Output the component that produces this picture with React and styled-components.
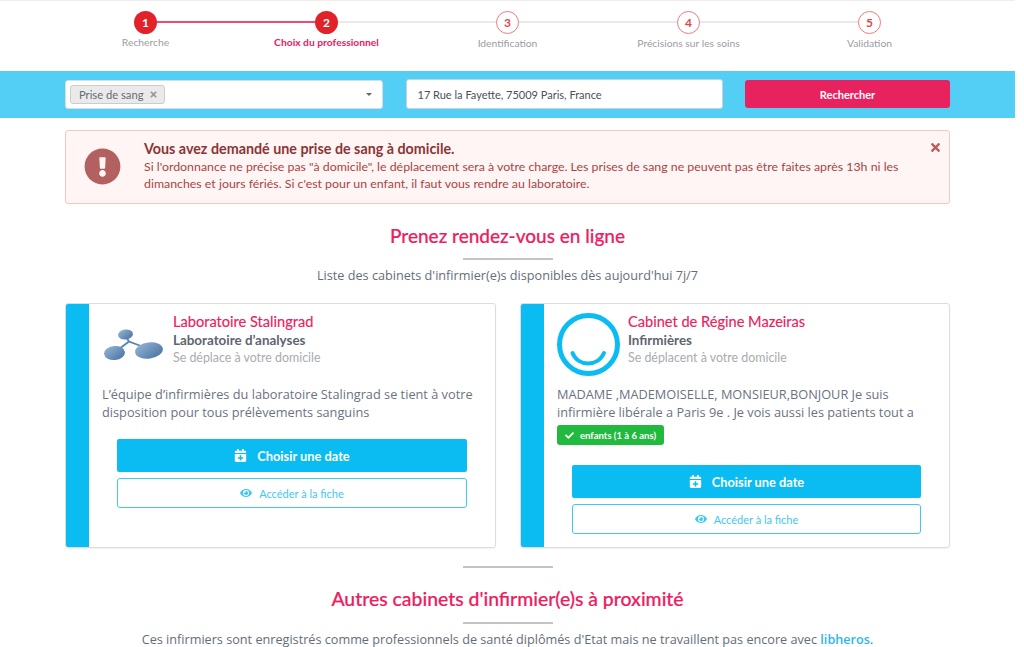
import React from 'react';
import styled, { createGlobalStyle } from 'styled-components';
import { FaCalendarPlus, FaEye, FaCheck, FaTimes, FaExclamationCircle } from 'react-icons/fa';

const GlobalStyle = createGlobalStyle`
  html, body {
    margin: 0;
    padding: 0;
    height: 647px;
    overflow: hidden;
    background: #fff;
    font-family: "Lato", "Liberation Sans", sans-serif;
  }
  #root {
    width: 1015px;
  }
  * {
    box-sizing: border-box;
  }
`;

const steps = [
  { label: 'Recherche', state: 'done' },
  { label: 'Choix du professionnel', state: 'current' },
  { label: 'Identification' },
  { label: 'Précisions sur les soins' },
  { label: 'Validation' },
];

const cards = [
  {
    name: 'Laboratoire Stalingrad',
    type: 'Laboratoire d’analyses',
    note: 'Se déplace à votre domicile',
    text: 'L’équipe d’infirmières du laboratoire Stalingrad se tient à votre disposition pour tous prélèvements sanguins',
    logo: 'lab',
  },
  {
    name: 'Cabinet de Régine Mazeiras',
    type: 'Infirmières',
    note: 'Se déplacent à votre domicile',
    text: 'MADAME ,MADEMOISELLE, MONSIEUR,BONJOUR Je suis infirmière libérale a Paris 9e . Je vois aussi les patients tout a',
    logo: 'smile',
    tag: 'enfants (1 à 6 ans)',
  },
];

const LabLogo = () => (
  <svg width="60" height="32" viewBox="0 0 60 32">
    <defs>
      <linearGradient id="blob" x1="0" y1="0" x2="1" y2="1">
        <stop offset="0" stopColor="#9ab8d8" />
        <stop offset="1" stopColor="#44709f" />
      </linearGradient>
    </defs>
    <path d="M22 8 L25 12.5 L37 17 M25 12.5 L15 20" stroke="#4f86b8" strokeWidth="1.8" fill="none" />
    <ellipse cx="21.5" cy="5.5" rx="7.5" ry="5" fill="url(#blob)" transform="rotate(-8 21.5 5.5)" />
    <ellipse cx="10.5" cy="24" rx="10.5" ry="7" fill="url(#blob)" transform="rotate(-6 10.5 24)" />
    <ellipse cx="45" cy="21.5" rx="14" ry="8" fill="url(#blob)" transform="rotate(-8 45 21.5)" />
  </svg>
);

const SmileLogo = () => (
  <svg width="63" height="63" viewBox="0 0 63 63">
    <circle cx="31.5" cy="31.5" r="29" fill="none" stroke="#0bbcf3" strokeWidth="5" />
    <path d="M15.5 40 C21 54 41 54 47 40" fill="none" stroke="#0bbcf3" strokeWidth="4" strokeLinecap="round" />
  </svg>
);

const Stepper = styled.div`
  height: 71px;
  border-top: 1px solid #eee;
  display: grid;
  grid-template-columns: repeat(5, 181px);
  justify-content: center;
  padding-top: 10px;
`;

const Step = styled.div`
  position: relative;
  display: flex;
  flex-direction: column;
  align-items: center;

  &:not(:last-child)::after {
    content: '';
    position: absolute;
    top: 10px;
    left: 50%;
    width: 100%;
    height: 2px;
    background: ${(p) => (p.$state === 'done' ? '#ec4a78' : '#eaeaea')};
  }
`;

const StepDot = styled.span`
  position: relative;
  z-index: 1;
  width: 23px;
  height: 23px;
  border-radius: 50%;
  display: flex;
  align-items: center;
  justify-content: center;
  font-size: 12px;
  font-weight: 700;
  color: ${(p) => (p.$filled ? '#fff' : '#e0474c')};
  background: ${(p) => (p.$filled ? '#e12329' : '#fff')};
  border: ${(p) => (p.$filled ? 'none' : '1px solid #ec7b7f')};
`;

const StepLabel = styled.span`
  margin-top: ${(p) => (p.$filled ? '1px' : '2px')};
  font-size: 10.3px;
  line-height: 14px;
  white-space: nowrap;
  color: ${(p) => (p.$current ? '#e8215f' : '#9a9da3')};
  font-weight: ${(p) => (p.$current ? 700 : 400)};
`;

const SearchBand = styled.div`
  height: 47px;
  padding-bottom: 1px;
  background: #53cff5;
  display: flex;
  justify-content: center;
  align-items: center;
`;

const SearchInner = styled.div`
  width: 885px;
  display: grid;
  grid-template-columns: 318px 317px 205px;
  justify-content: space-between;
  align-items: center;
`;

const SelectBox = styled.div`
  height: 29px;
  background: #fff;
  border: 1px solid #d5dce2;
  border-radius: 3px;
  padding: 0 10px 0 4px;
  display: flex;
  align-items: center;
  justify-content: space-between;
`;

const Chip = styled.span`
  height: 19px;
  padding: 0 6px 0 8px;
  display: inline-flex;
  align-items: center;
  gap: 5px;
  background: #eaeaea;
  border: 1px solid #ccc;
  border-radius: 3px;
  font-size: 11.2px;
  color: #666b73;
`;

const Caret = styled.span`
  width: 0;
  height: 0;
  border-left: 3px solid transparent;
  border-right: 3px solid transparent;
  border-top: 3px solid #666;
`;

const AddressInput = styled.div`
  height: 30px;
  background: #fff;
  border: 1px solid #c8d2da;
  border-radius: 3px;
  padding: 0 11px;
  display: flex;
  align-items: center;
  font-size: 11px;
  color: #4a4f5c;
`;

const SearchButton = styled.div`
  height: 28px;
  background: #e8215f;
  border-radius: 3px;
  color: #fff;
  font-size: 11px;
  font-weight: 700;
  display: flex;
  align-items: center;
  justify-content: center;
`;

const Main = styled.main`
  width: 885px;
  margin: 12px auto 0;
`;

const Alert = styled.div`
  position: relative;
  height: 74px;
  background: #fff5f4;
  border: 1px solid #eec9c5;
  border-radius: 3px;
  padding: 8px 40px 0 18px;
  display: flex;
  gap: 23px;
`;

const AlertIcon = styled.div`
  flex: none;
  width: 37px;
  height: 37px;
  margin-top: 9px;
  color: #b36060;
  display: flex;
`;

const AlertTitle = styled.div`
  font-size: 14.3px;
  line-height: 19px;
  font-weight: 700;
  color: #8c3434;
`;

const AlertText = styled.div`
  font-size: 12.35px;
  line-height: 17px;
  color: #a94442;
`;

const AlertClose = styled.span`
  position: absolute;
  top: 10px;
  right: 7px;
  color: #b36060;
  font-size: 13px;
  display: flex;
`;

const Section = styled.section`
  text-align: center;
`;

const Heading = styled.h2`
  margin: ${(p) => p.$top}px 0 0;
  font-size: ${(p) => p.$size}px;
  line-height: 24px;
  font-weight: 500;
  color: #ec2060;
  -webkit-text-stroke: 0.2px #ec2060;
`;

const Rule = styled.div`
  width: 90px;
  height: 2px;
  background: #c4c4c4;
  margin: ${(p) => p.$margin};
`;

const SubText = styled.p`
  margin: 0;
  font-size: 12.67px;
  line-height: 16px;
  color: #666d7a;
  font-family: "Open Sans", "Noto Sans", sans-serif;

  b {
    color: #2fb8e6;
    font-weight: 600;
  }
`;

const CardGrid = styled.div`
  display: grid;
  grid-template-columns: 431px 430px;
  justify-content: space-between;
  margin-top: 20px;
`;

const Card = styled.article`
  height: 245px;
  display: flex;
  border: 1px solid #dcdcdc;
  border-radius: 3px;
  overflow: hidden;
  box-shadow: 0 1px 2px rgba(0, 0, 0, 0.06);
`;

const CardBar = styled.div`
  flex: none;
  width: 23px;
  background: #0bbcf3;
`;

const CardBody = styled.div`
  flex: 1;
  padding: 8px 13px 0;
`;

const CardHead = styled.div`
  display: flex;
  height: 64px;
`;

const LogoSlot = styled.div`
  flex: none;
  width: 71px;
  padding-top: ${(p) => (p.$lab ? '17px' : '1px')};
  padding-left: ${(p) => (p.$lab ? '2px' : '0')};
`;

const CardName = styled.div`
  font-size: 14.6px;
  line-height: 20px;
  color: #ec2060;
  -webkit-text-stroke: 0.15px #ec2060;
`;

const CardType = styled.div`
  font-size: 13.4px;
  line-height: 17px;
  font-weight: 700;
  color: #5d6470;
`;

const CardNote = styled.div`
  font-size: 12.4px;
  line-height: 17px;
  color: #a8abb0;
`;

const CardText = styled.p`
  margin: 9px 0 0;
  font-family: "Open Sans", "Noto Sans", sans-serif;
  font-size: 12.75px;
  line-height: 18px;
  color: #6c7280;
`;

const Tag = styled.div`
  display: inline-flex;
  align-items: center;
  gap: 6px;
  height: 20px;
  margin-top: 4px;
  padding: 0 8px;
  background: #22b93f;
  border-radius: 3px;
  color: #fff;
  font-size: 9.5px;
  font-weight: 700;
`;

const CardActions = styled.div`
  margin: ${(p) => (p.$tagged ? '20px' : '18px')} 15px 0;
  display: flex;
  flex-direction: column;
  gap: 6px;
`;

const PrimaryButton = styled.div`
  height: 33px;
  background: #0bbcf3;
  border-radius: 2px;
  color: #fff;
  font-size: 12.8px;
  font-weight: 700;
  display: flex;
  align-items: center;
  justify-content: center;
  gap: 10px;
`;

const OutlineButton = styled.div`
  height: 30px;
  border: 1px solid #3fc8f4;
  border-radius: 3px;
  color: #3fc8f4;
  font-size: 11px;
  display: flex;
  align-items: center;
  justify-content: center;
  gap: 7px;
`;

export default function App() {
  return (
    <>
      <GlobalStyle />
      <Stepper>
        {steps.map((s, i) => (
          <Step key={s.label} $state={s.state}>
            <StepDot $filled={!!s.state}>{i + 1}</StepDot>
            <StepLabel $filled={!!s.state} $current={s.state === 'current'}>{s.label}</StepLabel>
          </Step>
        ))}
      </Stepper>

      <SearchBand>
        <SearchInner>
          <SelectBox>
            <Chip>
              Prise de sang <FaTimes size={9} color="#999" />
            </Chip>
            <Caret />
          </SelectBox>
          <AddressInput>17 Rue la Fayette, 75009 Paris, France</AddressInput>
          <SearchButton>Rechercher</SearchButton>
        </SearchInner>
      </SearchBand>

      <Main>
        <Alert>
          <AlertIcon><FaExclamationCircle size={37} /></AlertIcon>
          <div>
            <AlertTitle>Vous avez demandé une prise de sang à domicile.</AlertTitle>
            <AlertText>
              Si l'ordonnance ne précise pas "à domicile", le déplacement sera à votre charge. Les prises de sang ne peuvent pas être faites après 13h ni les dimanches et jours fériés. Si c'est pour un enfant, il faut vous rendre au laboratoire.
            </AlertText>
          </div>
          <AlertClose><FaTimes /></AlertClose>
        </Alert>

        <Section>
          <Heading $top={20} $size={19}>Prenez rendez-vous en ligne</Heading>
          <Rule $margin="10px auto 7px" />
          <SubText>Liste des cabinets d'infirmier(e)s disponibles dès aujourd'hui 7j/7</SubText>
        </Section>

        <CardGrid>
          {cards.map((c) => (
            <Card key={c.name}>
              <CardBar />
              <CardBody>
                <CardHead>
                  <LogoSlot $lab={c.logo === 'lab'}>
                    {c.logo === 'lab' ? <LabLogo /> : <SmileLogo />}
                  </LogoSlot>
                  <div>
                    <CardName>{c.name}</CardName>
                    <CardType>{c.type}</CardType>
                    <CardNote>{c.note}</CardNote>
                  </div>
                </CardHead>
                <CardText>{c.text}</CardText>
                {c.tag && (
                  <Tag>
                    <FaCheck size={9} /> {c.tag}
                  </Tag>
                )}
                <CardActions $tagged={!!c.tag}>
                  <PrimaryButton>
                    <FaCalendarPlus size={13} /> Choisir une date
                  </PrimaryButton>
                  <OutlineButton>
                    <FaEye size={12} /> Accéder à la fiche
                  </OutlineButton>
                </CardActions>
              </CardBody>
            </Card>
          ))}
        </CardGrid>

        <Section>
          <Rule $margin="18px auto 19px" />
          <Heading $top={0} $size={19.4}>Autres cabinets d'infirmier(e)s à proximité</Heading>
          <Rule $margin="11px auto 7px" />
          <SubText>
            Ces infirmiers sont enregistrés comme professionnels de santé diplômés d'Etat mais ne travaillent pas encore avec <b>libheros</b>.
          </SubText>
        </Section>
      </Main>
    </>
  );
}
